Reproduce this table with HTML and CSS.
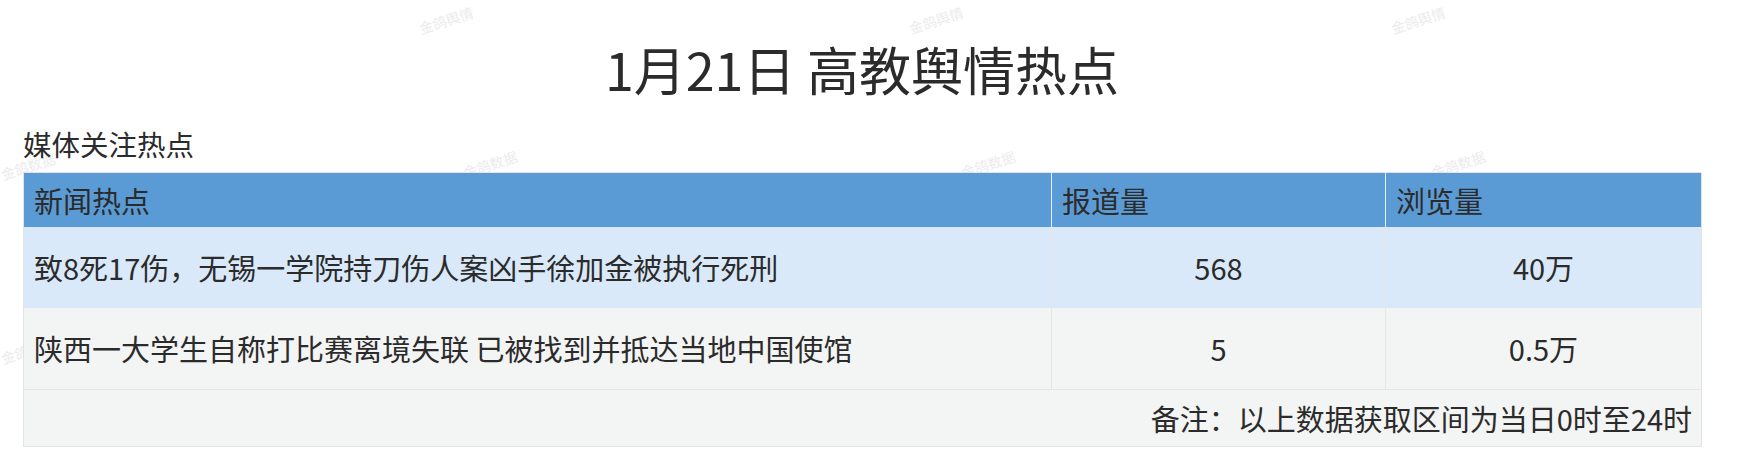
FILE: index.html
```html
<!DOCTYPE html>
<html lang="zh-CN">
<head>
<meta charset="utf-8">
<title>1月21日 高教舆情热点</title>
<link rel="stylesheet" href="styles.css">
</head>
<body>
<div class="page">
  <h1 class="title">1月21日 高教舆情热点</h1>
  <h2 class="subtitle">媒体关注热点</h2>
  <table class="hot">
    <colgroup>
      <col class="c1"><col class="c2"><col class="c3">
    </colgroup>
    <thead>
      <tr><th>新闻热点</th><th>报道量</th><th>浏览量</th></tr>
    </thead>
    <tbody>
      <tr class="r1"><td>致8死17伤，无锡一学院持刀伤人案凶手徐加金被执行死刑</td><td class="num">568</td><td class="num">40万</td></tr>
      <tr class="r2"><td>陕西一大学生自称打比赛离境失联 已被找到并抵达当地中国使馆</td><td class="num">5</td><td class="num">0.5万</td></tr>
      <tr class="note"><td colspan="3">备注：以上数据获取区间为当日0时至24时</td></tr>
    </tbody>
  </table>
  <span class="wm wm1">金鸽舆情</span>
  <span class="wm wm2">金鸽舆情</span>
  <span class="wm wm3">金鸽舆情</span>
  <span class="wm wm4">金鸽数据</span>
  <span class="wm wm5">金鸽数据</span>
  <span class="wm wm6">金鸽数据</span>
  <span class="wm wm7">金鸽数据</span>
  <span class="wm wm8">金鸽数据</span>
</div>
</body>
</html>
```
FILE: styles.css
```css
html, body {
  margin: 0;
  padding: 0;
  background: #ffffff;
}
body {
  font-family: "Noto Sans CJK SC", "Noto Sans", sans-serif;
  color: #2b2b2b;
}
.page {
  position: relative;
  z-index: 0;
  width: 1738px;
  height: 470px;
  overflow: hidden;
}
.title {
  margin: 0;
  padding-top: 39px;
  width: 1724px;
  text-align: center;
  font-size: 52px;
  font-weight: 400;
  line-height: 60px;
  color: #2b2b2b;
}
.subtitle {
  margin: 0;
  padding: 28px 0 0 23px;
  font-size: 28.5px;
  font-weight: 400;
  line-height: 34px;
  height: 34px;
  color: #2b2b2b;
}
.hot {
  margin: 11px 0 0 23px;
  width: 1678px;
  border-collapse: collapse;
  table-layout: fixed;
  font-size: 29px;
  border: 1px solid #e3e3e3;
}
.c1 { width: 1028px; }
.c2 { width: 334px; }
.c3 { width: 316px; }
.hot th {
  background: #5b9bd5;
  height: 54px;
  padding: 0 0 0 10px;
  text-align: left;
  font-weight: 400;
  color: #2b2b2b;
  border-left: 1px solid #e6eef7;
  border-bottom: 0;
  box-sizing: border-box;
}
.hot th:first-child { border-left: 0; }
.hot td {
  padding: 0 0 0 10px;
  border-left: 1px solid #e6e6e6;
  color: #2b2b2b;
}
.hot td:first-child { border-left: 0; }
.hot td.num {
  text-align: center;
  padding: 0;
}
.r1 td {
  background: #d9e9f9;
  height: 81px;
}
.r2 td {
  background: #f3f4f4;
  height: 81px;
}
.note td {
  background: #f3f4f4;
  height: 56px;
  text-align: right;
  padding: 0 9px 0 0;
  border-top: 1px solid #e6e6e6;
}
.wm {
  position: absolute;
  z-index: -1;
  font-size: 14px;
  line-height: 20px;
  color: #ececec;
  transform: rotate(-18deg);
  white-space: nowrap;
  pointer-events: none;
}
.wm1 { left: 418px; top: 10px; }
.wm2 { left: 908px; top: 10px; }
.wm3 { left: 1390px; top: 10px; }
.wm4 { left: 0; top: 156px; }
.wm5 { left: 462px; top: 154px; }
.wm6 { left: 960px; top: 154px; }
.wm7 { left: 1430px; top: 154px; }
.wm8 { left: 0; top: 340px; }
```
